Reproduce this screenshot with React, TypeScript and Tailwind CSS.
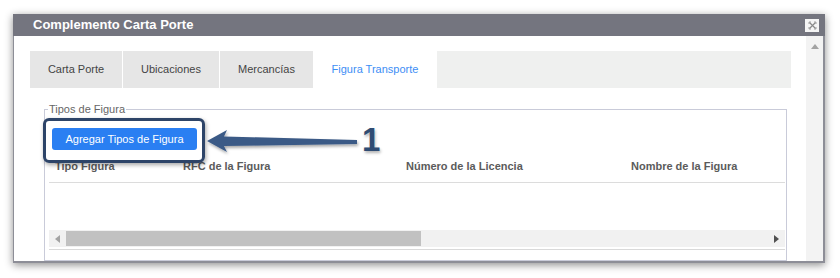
import React from "react";

const font = { fontFamily: '"Liberation Sans", Arial, sans-serif' };

function Tab({ label, w, active }: { label: string; w: string; active?: boolean }) {
  return (
    <div
      className={
        "flex items-center justify-center h-full text-[11px] border-r border-white " +
        w +
        (active ? " bg-white text-[#3d8ef5]" : " bg-[#e6e6e6] text-[#444]")
      }
    >
      {label}
    </div>
  );
}

export default function App() {
  return (
    <div className="relative w-[840px] h-[278px] bg-white overflow-hidden" style={font}>
      <div className="ml-[13px] pt-[14px] w-[812px]">
        <div className="w-[812px] h-[249px] flex flex-col shadow-[0_2px_8px_rgba(0,0,0,0.45)]">
          {/* title bar */}
          <div className="h-[23px] bg-[#74757f] flex items-center pl-[20px] pr-[6px]">
            <span className="text-white font-bold text-[13px] flex-1">Complemento Carta Porte</span>
            <div className="w-[14px] h-[13px] bg-[#f4f4f4] flex items-center justify-center">
              <svg width="9" height="9" viewBox="0 0 9 9">
                <path d="M1.5 1.5 L7.5 7.5 M7.5 1.5 L1.5 7.5" stroke="#8a8a8a" strokeWidth="1.2" />
                <path d="M1 1 L3 1 M1 1 L1 3 M8 1 L6 1 M8 1 L8 3 M1 8 L3 8 M1 8 L1 6 M8 8 L6 8 M8 8 L8 6" stroke="#9a9a9a" strokeWidth="0.9" />
              </svg>
            </div>
          </div>
          {/* body */}
          <div className="flex-1 flex bg-white border-l border-r-2 border-b-2 border-[#8d8e97]">
            <div className="flex-1 pl-[16px] pt-[15px]">
              <div className="w-[761px] h-[37px] bg-[#eff0ef] flex">
                <Tab label="Carta Porte" w="w-[93px]" />
                <Tab label="Ubicaciones" w="w-[97px]" />
                <Tab label="Mercancías" w="w-[94px]" />
                <Tab label="Figura Transporte" w="w-[123px]" active />
              </div>
              <fieldset className="ml-[14px] mt-[15px] w-[743px] h-[158px] border border-[#c9cbd9] pl-[3px] pr-px">
                <legend className="text-[11px] leading-[13px] text-[#666] px-px">Tipos de Figura</legend>
                <div className="pt-[12px] pl-[4px]">
                  <div className="w-[145px] h-[22px] rounded-[3px] bg-[#2a7ff2] text-white text-[11px] flex items-center justify-center">
                    Agregar Tipos de Figura
                  </div>
                </div>
                <div className="ml-px w-[736px] border-b border-[#d9d9d9]">
                  <div className="h-[33px] grid grid-cols-[128px_223px_225px_1fr] pl-[6px] items-center border-b border-[#dcdcdc] text-[11px] font-bold text-[#5b5b5b]">
                    <span>Tipo Figura</span>
                    <span>RFC de la Figura</span>
                    <span>Número de la Licencia</span>
                    <span>Nombre de la Figura</span>
                  </div>
                  <div className="h-[47px]" />
                  <div className="h-[17px] bg-[#f1f1f1] flex items-center mb-[2px]">
                    <div className="w-[17px] h-full flex items-center justify-center">
                      <svg width="5" height="8" viewBox="0 0 5 8"><path d="M5 0 L0 4 L5 8 Z" fill="#a3a3a3" /></svg>
                    </div>
                    <div className="w-[355px] h-[15px] bg-[#c1c1c1]" />
                    <div className="flex-1" />
                    <div className="w-[17px] h-full flex items-center justify-center">
                      <svg width="5" height="8" viewBox="0 0 5 8"><path d="M0 0 L5 4 L0 8 Z" fill="#505050" /></svg>
                    </div>
                  </div>
                </div>
              </fieldset>
            </div>
            {/* vertical scrollbar */}
            <div className="w-[17px] bg-[#f3f3f3] flex justify-center pt-[8px]">
              <svg width="8" height="5" viewBox="0 0 8 5"><path d="M0 5 L4 0 L8 5 Z" fill="#a3a3a3" /></svg>
            </div>
          </div>
        </div>
      </div>

      {/* annotation: highlight box */}
      <div className="absolute left-[43px] top-[118px] w-[162px] h-[45px] border-[3px] border-[#2d4468] rounded-[6px] shadow-[1px_2px_4px_rgba(0,0,0,0.35)]" />
      {/* annotation: arrow */}
      <svg className="absolute left-[200px] top-[124px]" width="165" height="36" viewBox="200 124 165 36">
        <defs>
          <filter id="sh" x="-10%" y="-30%" width="120%" height="160%">
            <feDropShadow dx="1" dy="2" stdDeviation="1.5" floodColor="#000" floodOpacity="0.35" />
          </filter>
        </defs>
        <path d="M207 141 L227 130 L224 136.5 L357 140 L357 144 L224 146 L227 152 Z" fill="#3b5a86" filter="url(#sh)" />
      </svg>
      <div
        className="absolute left-[362px] top-[120px] text-[33px] leading-[40px] font-bold text-[#2f4c73] [text-shadow:1px_2px_3px_rgba(0,0,0,0.3)]"
        style={{ fontFamily: '"Liberation Sans", Arial, sans-serif' }}
      >
        1
      </div>
    </div>
  );
}
